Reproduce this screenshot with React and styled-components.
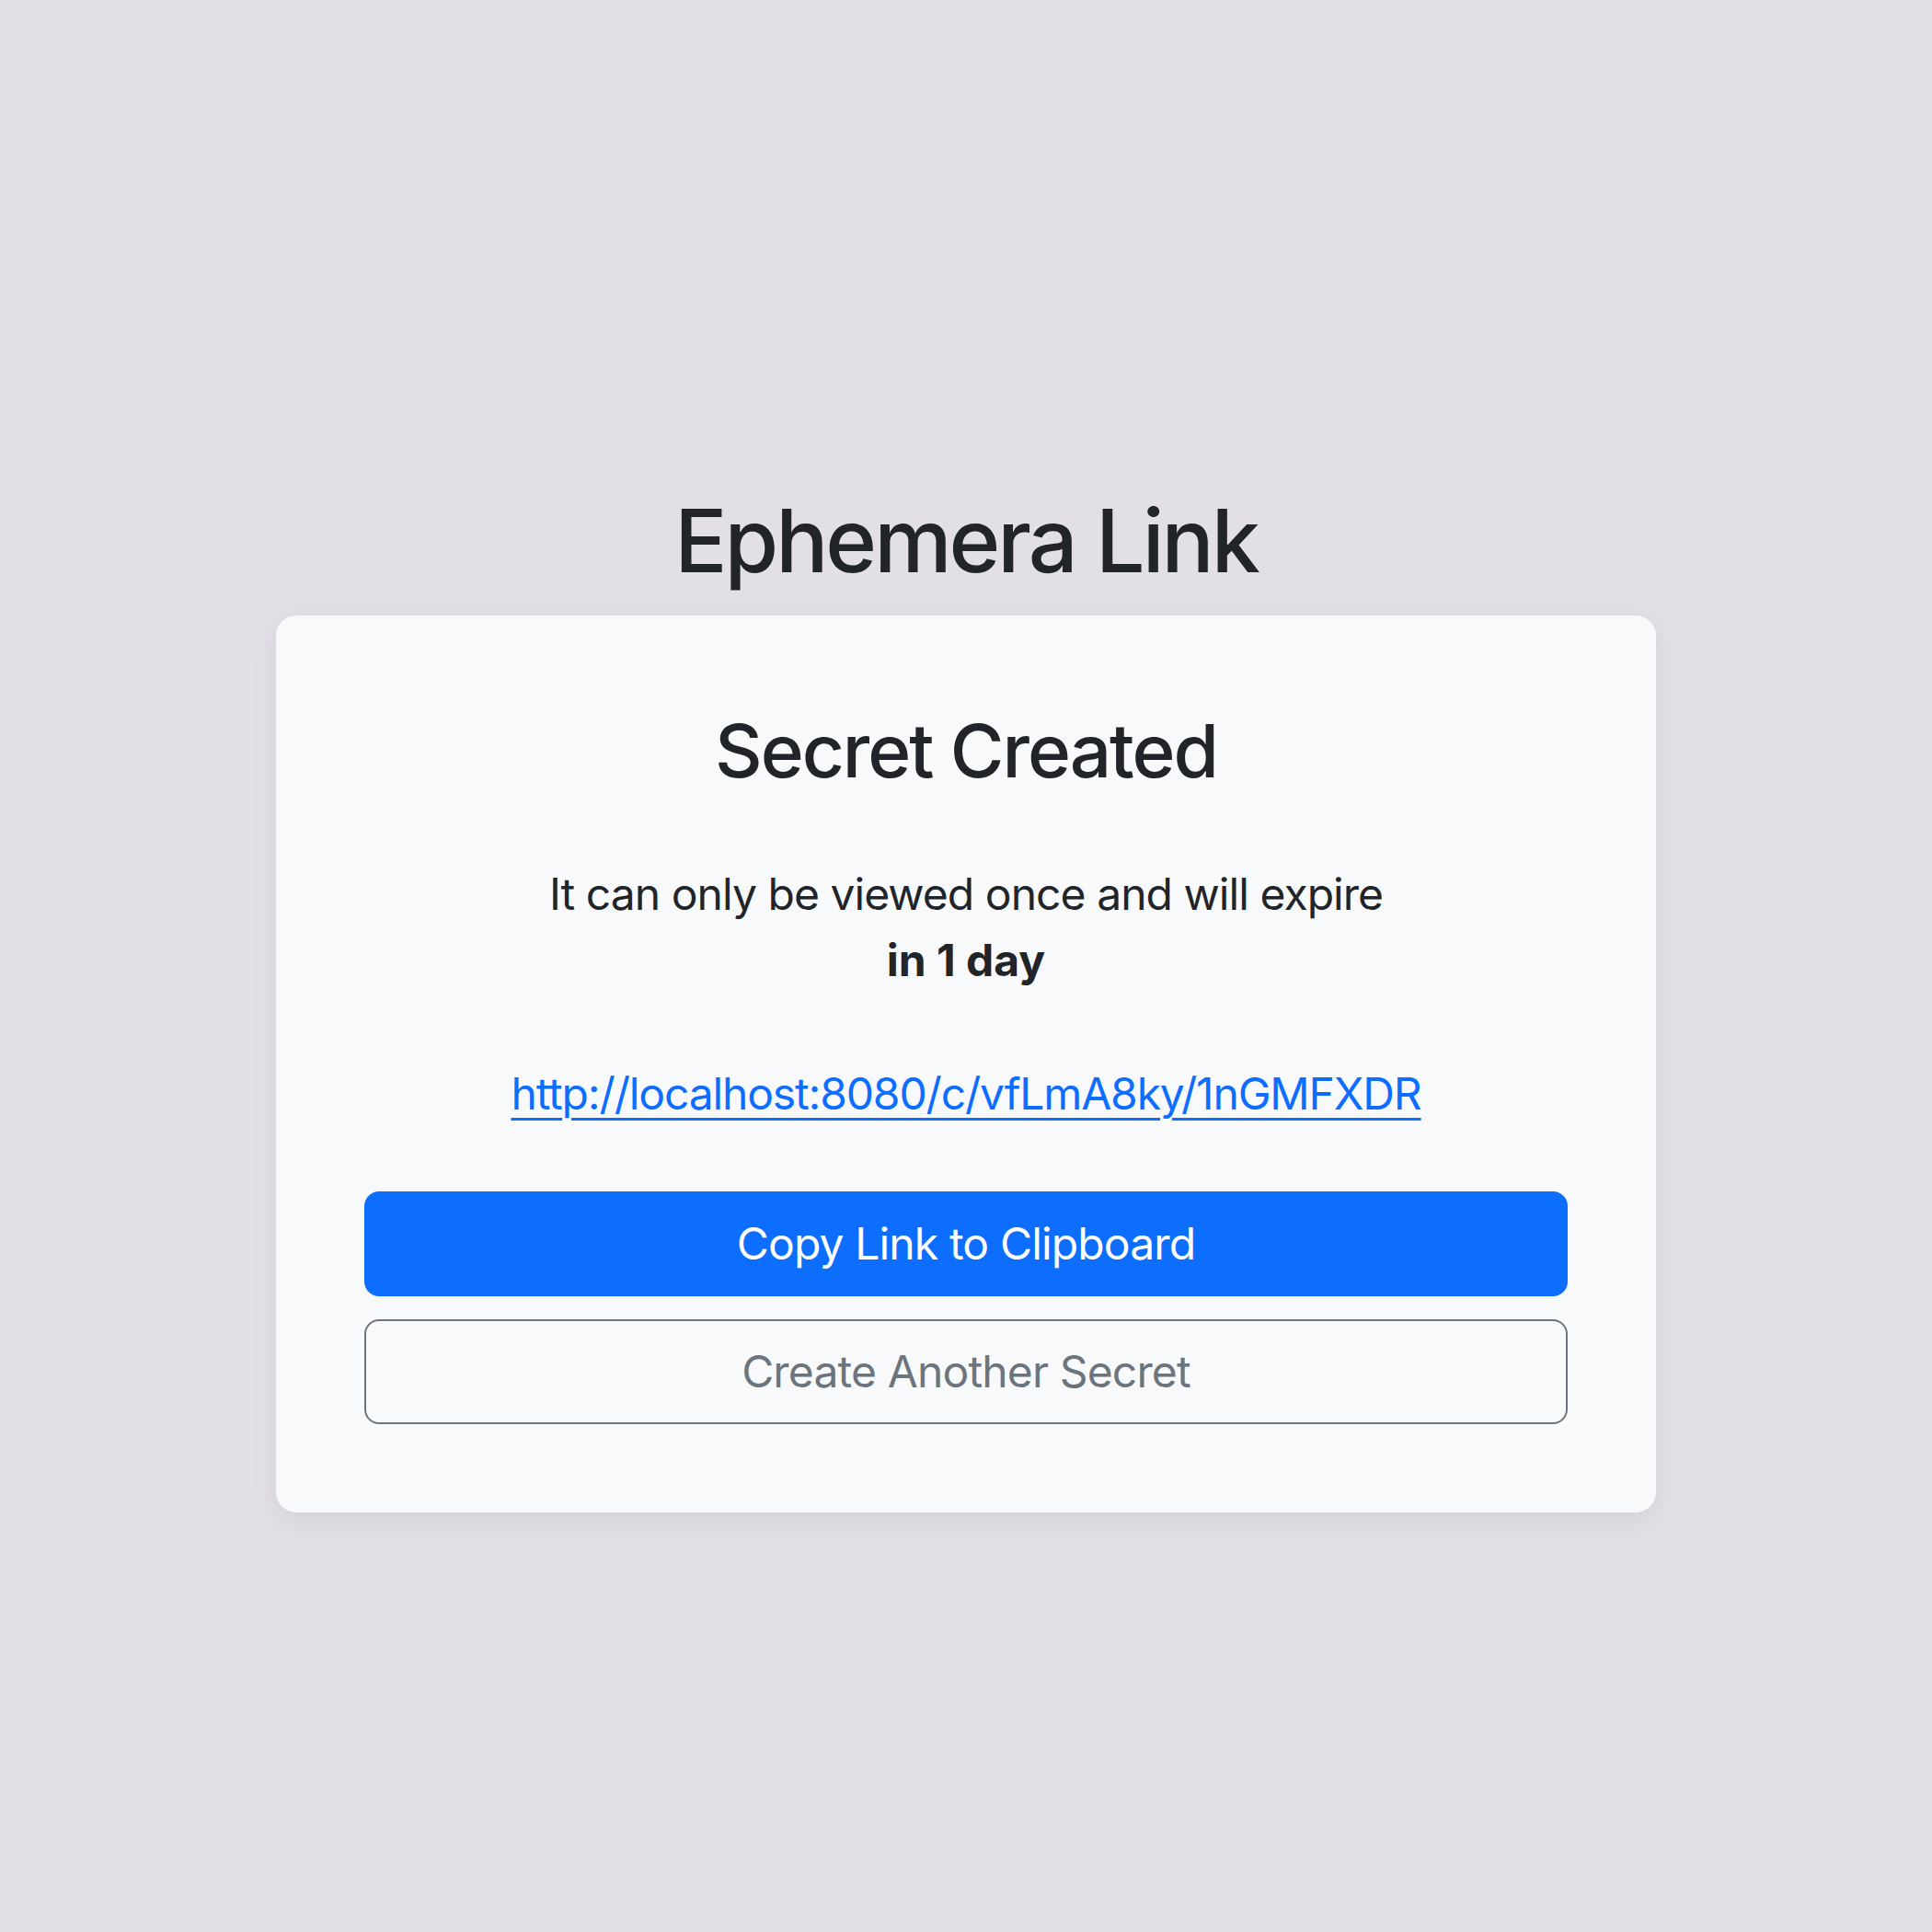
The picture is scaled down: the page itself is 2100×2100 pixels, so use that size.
import React from "react";
import styled, { createGlobalStyle } from "styled-components";

const GlobalStyle = createGlobalStyle`
  html, body {
    margin: 0;
    padding: 0;
    background: #e2e0e6;
  }
  body {
    font-family: Inter, "Noto Sans", "Liberation Sans", sans-serif;
    color: #212529;
  }
`;

const Page = styled.main`
  min-height: 2100px;
  padding-top: 530px;
  box-sizing: border-box;
  display: flex;
  flex-direction: column;
  align-items: center;
`;

const Brand = styled.h1`
  margin: 0 0 24px;
  font-size: 95px;
  line-height: 115px;
  font-weight: 500;
  letter-spacing: -3px;
  color: #212529;
`;

const Card = styled.section`
  width: 1500px;
  box-sizing: border-box;
  padding: 99px 96px 96px;
  background: #f8f9fa;
  border-radius: 22px;
  box-shadow: 0 8px 28px rgba(0, 0, 0, 0.07);
  display: flex;
  flex-direction: column;
  align-items: center;
  text-align: center;
`;

const Heading = styled.h2`
  margin: 0 0 72px;
  font-size: 80px;
  line-height: 96px;
  font-weight: 500;
  letter-spacing: -2px;
`;

const Note = styled.p`
  margin: 0 0 73px;
  font-size: 48px;
  line-height: 72px;
  font-weight: 400;
  letter-spacing: -0.95px;
  strong {
    font-weight: 700;
    letter-spacing: 0;
  }
`;

const SecretLink = styled.a`
  font-size: 48px;
  line-height: 72px;
  letter-spacing: -1.15px;
  color: #0d6efd;
  text-decoration: underline;
  text-decoration-thickness: 3px;
  text-underline-offset: 9px;
  margin-bottom: 70px;
`;

const Actions = styled.div`
  width: 100%;
  display: flex;
  flex-direction: column;
  gap: 25px;
`;

const Button = styled.button`
  width: 100%;
  box-sizing: border-box;
  padding: 19px 24px;
  font-family: inherit;
  font-size: 48px;
  line-height: 72px;
  font-weight: 400;
  letter-spacing: -0.85px;
  border-radius: 16px;
  border: 2.5px solid ${(p) => (p.$variant === "primary" ? "#0d6efd" : "#6c757d")};
  background: ${(p) => (p.$variant === "primary" ? "#0d6efd" : "transparent")};
  color: ${(p) => (p.$variant === "primary" ? "#ffffff" : "#6c757d")};
  cursor: pointer;
`;

export default function App() {
  const url = "http://localhost:8080/c/vfLmA8ky/1nGMFXDR";

  return (
    <>
      <GlobalStyle />
      <Page>
        <Brand>Ephemera Link</Brand>
        <Card>
          <Heading>Secret Created</Heading>
          <Note>
            It can only be viewed once and will expire
            <br />
            <strong>in 1 day</strong>
          </Note>
          <SecretLink href={url}>{url}</SecretLink>
          <Actions>
            <Button $variant="primary">Copy Link to Clipboard</Button>
            <Button $variant="outline">Create Another Secret</Button>
          </Actions>
        </Card>
      </Page>
    </>
  );
}
